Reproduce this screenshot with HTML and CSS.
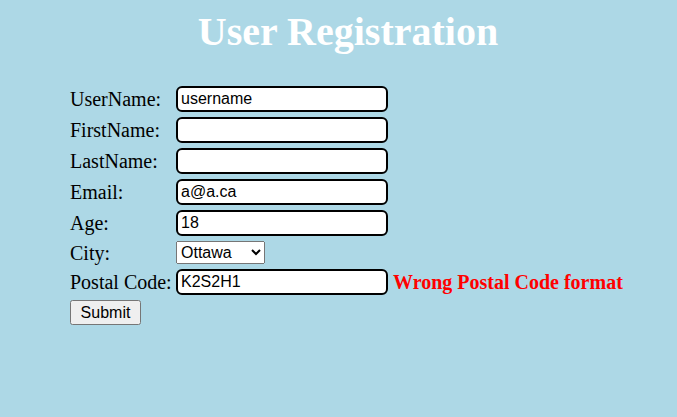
FILE: index.html
```html
<!DOCTYPE html>
<html>
<head>
<meta charset="utf-8">
<link rel="stylesheet" href="styles.css">
</head>
<body>
<h1 class="title">User Registration</h1>
<form class="reg-form">
  <label class="lbl" for="u">UserName:</label>
  <input class="field" id="u" type="text" value="username">
  <span></span>

  <label class="lbl" for="f">FirstName:</label>
  <input class="field" id="f" type="text" value="">
  <span></span>

  <label class="lbl" for="l">LastName:</label>
  <input class="field" id="l" type="text" value="">
  <span></span>

  <label class="lbl" for="e">Email:</label>
  <input class="field" id="e" type="text" value="a@a.ca">
  <span></span>

  <label class="lbl" for="a">Age:</label>
  <input class="field" id="a" type="text" value="18">
  <span></span>

  <label class="lbl" for="c">City:</label>
  <div class="sel-cell"><select class="city" id="c"><option>Ottawa</option><option>Toronto</option></select></div>
  <span></span>

  <label class="lbl" for="p">Postal Code:</label>
  <input class="field" id="p" type="text" value="K2S2H1">
  <span class="error">Wrong Postal Code format</span>

  <div class="submit-row"><button class="submit" type="button">Submit</button></div>
</form>
</body>
</html>
```
FILE: styles.css
```css
html, body {
  background: #add8e6;
}
body {
  margin: 8px;
  font-family: "Liberation Serif", "Times New Roman", serif;
}
.title {
  margin: 0;
  padding-left: 19px;
  text-align: center;
  color: #fff;
  font-size: 40px;
  font-weight: bold;
}
.reg-form {
  display: grid;
  grid-template-columns: 106px 212px auto;
  row-gap: 5px;
  align-items: center;
  margin: 31px 0 0 62px;
}
.lbl {
  font-size: 20px;
  line-height: 22px;
  color: #000;
}
.field {
  box-sizing: border-box;
  width: 212px;
  height: 26px;
  margin: 0;
  padding: 1px 3px;
  border: 2px solid #000;
  border-radius: 6px;
  background: #fff;
  font-family: "Liberation Sans", Arial, sans-serif;
  font-size: 16px;
  color: #000;
}
.sel-cell {
  display: flex;
}
.city {
  margin: 0;
  height: 23px;
  width: 89px;
  font-family: "Liberation Sans", Arial, sans-serif;
  font-size: 16px;
}
.error {
  margin-left: 5px;
  color: #f00;
  font-weight: bold;
  font-size: 20px;
  line-height: 22px;
}
.submit-row {
  grid-column: 1 / -1;
  display: flex;
}
.submit {
  margin: 0;
  height: 25px;
  width: 71px;
  font-family: "Liberation Sans", Arial, sans-serif;
  font-size: 16px;
}
```
